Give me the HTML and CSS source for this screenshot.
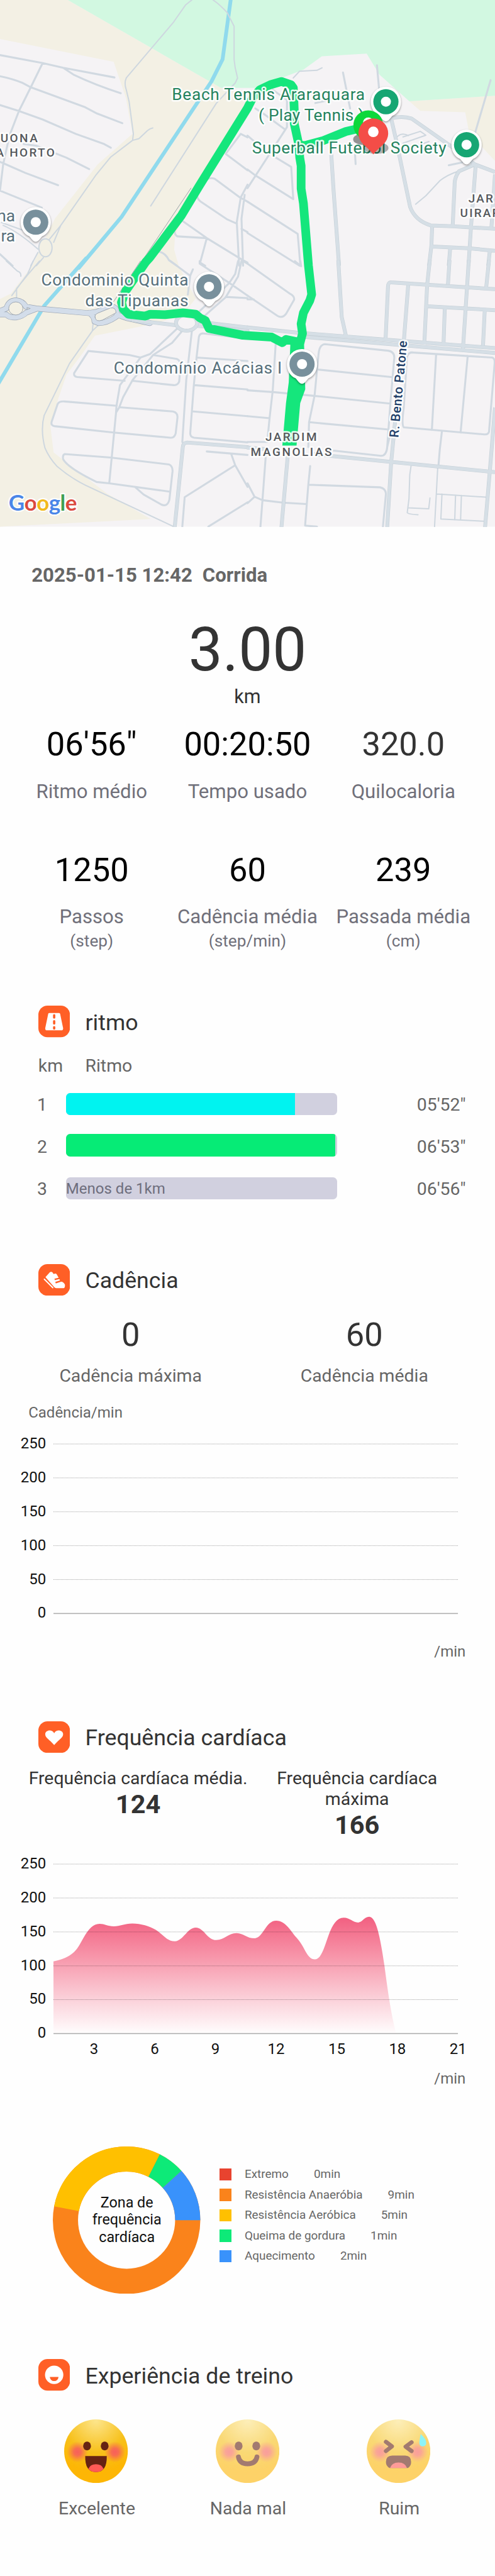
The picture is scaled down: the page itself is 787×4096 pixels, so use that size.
FILE: index.html
```html
<!DOCTYPE html>
<html lang="pt-BR">
<head>
<meta charset="utf-8">
<title>Corrida</title>
<link rel="stylesheet" href="styles.css">
</head>
<body>
<svg class="map" viewBox="0 0 1080 1150" preserveAspectRatio="none">
  <defs>
    <g id="pin"><path class="pin-body" d="M0 43C-5 43-8 38-14 31C-26 26-33 14-33 0A33 33 0 0 1 33 0C33 14 26 26 14 31C8 38 5 43 0 43Z"/><circle r="27.5" fill="currentColor"/><circle r="11" fill="#fff"/></g>
    <g id="q2casing">
      <path d="M530 900L545 1120L580 1568M910 700L940 820L1030 1220Q1060 1300 1160 1330L1300 1335L1568 1350M900 700Q980 680 1040 700L1300 870L1440 970L1568 1015M1440 970L1340 1010Q1310 1050 1312 1090L1300 1330M1445 980L1415 1350L1400 1568M1568 1030L1545 1345M1170 1335L1165 1450L1150 1568M1170 1455L1400 1465L1568 1480M1284 1465L1275 1568M1535 1480L1525 1568"/>
    </g>
    <g id="q4casing">
      <path d="M575 -5L597 325L625 440M875 450L890 150Q890 122 910 124L1568 163M1018 140L990 470M1155 -5L1138 140L1120 485M1280 -5L1270 135M1402 -5L1365 510M1530 -5L1512 155M1138 262L1568 285M1250 270L1242 480M1503 285L1492 490M-5 385L310 415L860 455L1568 505M360 440L620 460L1568 533M935 930L910 1170L885 1545M420 1120L540 1132L1568 1225M255 1130L215 1545M1568 850L1535 1220L1505 1545M-5 1082L120 1092"/>
    </g>
  </defs>
  <rect width="1080" height="1150" fill="#f5f3f5"/>
  <path fill="#f3f0e4" d="M0 0H148L482 192L545 200L540 235L396 481L382 514L380 545L390 580L427 652L396 690L327 709L207 733L179 773L145 818L127 871L110 931L117 988L165 1025L234 1078L329 1133L0 1150V653L24 641L70 580L120 477L213 359L289 292L275 215L248 135L0 85ZM893 221L917 242L1015 245L1024 292L1080 351V209Z"/>
  <path fill="#d2f8e1" d="M148 0L482 192H557L662 152L702 123L800 117L828 163L893 221L1080 209V0Z"/>

  <g class="roads" transform="scale(.3444 .37)">
    <path class="river" d="M1462 -5L1410 350L1340 480L770 1280L500 1580"/>
    <path class="minor" d="M0 325L270 372L400 400L725 457M400 400L465 440Q600 500 765 550M0 450Q80 465 145 490L195 515L540 633L615 670L775 727M0 620L120 655L270 705L480 790L660 850L702 872M150 850L230 860L420 930L565 998M0 955L25 965L160 1020L368 1093M270 372L195 515L120 655L60 800L20 970L0 1125L265 1225M0 1125V1100M0 1500L80 1568M1568 810L1525 790L1430 908L1568 1005M1310 1060Q1330 1045 1360 1055L1520 1165L1568 1190M1310 1060L1250 1150Q1245 1175 1280 1195L1440 1295L1500 1320M1568 1090L1525 1165L1500 1310L1515 1568M1550 1150L1530 1290L1540 1568M1530 1350L1568 1370M1105 1350L1150 1300L1310 1405L1520 1525L1568 1550M1105 1350Q1105 1390 1125 1395L1310 1405L1268 1550L1300 1568M1010 1485Q1050 1495 1070 1535L1120 1568"/>
    <path class="thin" d="M1215 0L1175 30L1100 130L800 460Q785 490 800 530L818 600L845 790L840 828L700 928L610 1030L385 1330L340 1430M840 828L880 818L935 770Q950 758 968 755M1350 0Q1390 25 1440 75L1483 155V350L1490 400L1505 460L1490 490L1370 610L955 1215M0 1310L150 1360M20 1330Q120 1370 240 1470M385 1330L310 1415M240 1490L195 1568M275 1520L230 1568"/>
    <ellipse class="thin" cx="288" cy="1462" rx="42" ry="53" fill="#f3f0e4"/>
    <path class="edge" d="M1210 1110L880 1568"/>
  </g>
  <g class="roads" transform="translate(540 0) scale(.3444 .37)">
    <path class="minor" d="M160 530L250 590V750L0 1110M100 670L240 765M0 800L50 840M50 640L100 670M0 1000L50 1035L290 1175L277 985L180 930M0 1190L318 1380L335 1568M0 1375L330 1568M605 428L650 640M820 385L835 540M680 890L685 968M430 608L520 590M1275 975L1360 958M1540 473L1440 790"/>
    <path class="thin" d="M290 460L330 420L440 415L472 400M985 808L1095 775L1130 798L985 845M950 805Q980 780 1020 800M1065 1205L1130 1155L1220 1065Q1270 1030 1330 1012M1000 885L1150 835"/>
    <use href="#q2casing" class="casing"/><use href="#q2casing" class="street"/>
  </g>
  <g class="roads" transform="translate(0 570) scale(.3444 .3762)">
    <path class="river" d="M545 -15L280 260L-10 710"/>
    <path class="thin" d="M40 0L110 58Q135 65 132 88M210 0L175 75L75 200M250 0L175 80L105 160V210M590 360L585 405L440 595L280 895Q255 980 285 1085Q310 1140 360 1190Q450 1260 540 1300L1100 1541M620 375L585 405"/>
    <path class="minor" d="M1080 0L1205 85L1222 48M1205 85L1190 195M1265 0V15L1450 125L1568 200M1508 0L1490 75L1450 130L1265 290M1530 0L1508 90L1430 210L1300 315M1430 208L1568 215M1540 0L1568 15M1130 385L950 540L890 560L760 720L738 840L735 880L692 1290M1150 410L1090 475L970 545L840 690L780 790L755 850L735 880M560 522L820 545L890 560M560 522L470 650Q465 670 490 673L790 695M970 545L1120 568Q1145 578 1143 610L1135 700Q1125 722 1100 720L840 695M740 840L410 815Q375 812 365 830L328 930Q320 955 345 958L720 995M755 848L1095 873Q1128 880 1124 910L1113 1000Q1105 1027 1080 1025L720 995M700 1140L410 1120Q395 1125 400 1150Q430 1200 612 1282L692 1290M700 1140L1070 1180Q1095 1190 1093 1220L1073 1385Q1060 1430 1020 1412L910 1355L860 1315M692 1290L1075 1338M1215 410L1180 690L1155 1050M1568 450L1290 420Q1265 418 1260 440L1245 560L1228 720L1205 1000Q1205 1022 1230 1025L1568 1052M1245 560L1568 580M1232 720L1568 745M1215 872L1568 900M1310 1105L1568 1125M1465 1120L1490 1185L1568 1310M1490 1185L1170 1370L1155 1541M1320 1541L1568 1400"/>
    <path class="highway-edge" d="M0 290L40 275Q55 230 100 228Q145 232 165 265L230 275L560 302L610 295L700 265Q745 262 740 310L800 330L950 360M0 310L40 310Q60 330 100 327Q145 320 165 300L230 277M565 300Q600 325 598 350L625 360Q680 360 740 320"/>
    <path class="highway" d="M0 290L40 275Q55 230 100 228Q145 232 165 265L230 275L560 302L610 295L700 265Q745 262 740 310L800 330L950 360M0 310L40 310Q60 330 100 327Q145 320 165 300L230 277M565 300Q600 325 598 350L625 360Q680 360 740 320"/>
    <ellipse cx="100" cy="275" rx="45" ry="38" fill="#f3f0e4" stroke="#9da7b4"/>
    <path class="island" d="M602 325Q600 310 620 302L700 272Q735 268 735 300L650 342Q605 357 602 325ZM172 270L192 275L174 280Z"/>
    <path class="casing" d="M840 342L1110 372M1235 375L1568 405M1230 350L1568 385M1568 1080L1185 1053Q1160 1055 1158 1080L1105 1560"/>
    <path class="street" d="M840 342L1110 372M1235 375L1568 405M1230 350L1568 385M1568 1080L1185 1053Q1160 1055 1158 1080L1105 1560"/>
    <ellipse class="casing" cx="1182" cy="358" rx="67" ry="46" fill="#f5f3f5"/>
    <ellipse class="street" cx="1182" cy="358" rx="67" ry="46" fill="none"/>
    <path class="edge" d="M890 0L720 235"/>
  </g>
  <g class="roads" transform="translate(540 570) scale(.3444 .3762)">
    <path class="minor" d="M0 15L270 190Q300 205 295 225L245 305Q220 335 190 318L40 225L0 200M0 222H40M300 0L340 30L335 0M180 460L160 750L140 910L125 1050L0 1050M0 750L160 760L420 782L905 827M0 900L140 912M905 1000L885 1080Q880 1130 845 1130L545 1100M390 935L885 977M450 630L910 673M385 1080L390 935L425 780L450 540Q455 485 490 482L890 520Q930 525 930 560L905 827L885 1080M1035 530L1550 560Q1570 565 1565 600L1530 990Q1525 1008 1500 1006L990 965Q975 950 990 850L1010 560Q1015 530 1045 530M1195 540L1168 980M1395 550L1350 995M1232 985L1218 1095L1210 1185M115 1140L95 1385L82 1541M0 1290L45 1368L0 1405M45 1368L95 1388L225 1402L375 1410M397 1190L385 1300L365 1535L440 1541M385 1298L840 1313Q875 1320 877 1350L858 1541"/>
    <path class="thin" d="M1036 1190L1028 1240L1023 1380L1012 1460Q1018 1470 1080 1472M1020 1432L1148 1438L1156 1375M1205 1200L1185 1541M1200 1352L1510 1370M1232 1352L1225 1497L1500 1510M1318 1358L1313 1502M1355 1360L1350 1502"/>
    <use href="#q4casing" class="casing"/><use href="#q4casing" class="street"/>
  </g>

  <path class="route" d="M785 280L755 287L705 307L664 318L652 316L642 270V240L640 192L635 185L614 178L590 185L567 196L552 212L540 236L434 407L396 470L327 562L318 572L275 634L265 660L269 675L280 686L317 690L328 686L360 687L399 683L427 686L436 694L448 700L456 717L530 732L593 736L616 748L624 741L647 746"/>
  <path class="route" d="M652 316L654 344L657 362V412L662 444L673 580L680 643L676 656L662 683L657 707L660 728L655 747L645 755"/>
  <path fill="#15e67c" d="M634 740L663 736L666 850L655 880L647 973H616L624 880L630 835Z"/>

  <g class="poi">
    <text x="375" y="219" textLength="421">Beach Tennis Araraquara</text>
    <text x="564" y="264" textLength="230">( Play Tennis )</text>
    <text x="550" y="335.500" textLength="424">Superball Futebol Society</text>
  </g>
  <g class="poi slate">
    <text x="33" y="483" text-anchor="end">na</text>
    <text x="33" y="527" text-anchor="end">ra</text>
    <text x="90" y="624" textLength="321">Condominio Quinta</text>
    <text x="186" y="669" textLength="225">das Tipuanas</text>
    <text x="248" y="815" textLength="367">Condomínio Acácias I</text>
  </g>
  <g class="district">
    <text x="1" y="310" textLength="84">UONA</text>
    <text x="-9" y="342" textLength="131">A HORTO</text>
    <text x="1022" y="442">JAR</text>
    <text x="1004" y="474">UIRAP</text>
    <text x="579" y="963" textLength="115">JARDIM</text>
    <text x="547" y="995" textLength="180">MAGNOLIAS</text>
  </g>
  <text class="street-name" transform="translate(872 924) rotate(-84.800)" x="-32" textLength="212">R. Bento Patone</text>

  <use href="#pin" x="78" y="485" color="#78909c"/>
  <use href="#pin" x="456" y="626" color="#78909c"/>
  <use href="#pin" x="659" y="795" color="#78909c"/>
  <use href="#pin" x="842" y="222" color="#17a673"/>
  <use href="#pin" x="1018" y="316" color="#17a673"/>
  <g transform="translate(803.500 271)">
    <ellipse cx="-8" cy="33" rx="25" ry="13" fill="#000" opacity=".4"/>
    <path fill="#0cd83b" d="M0 49Q-5 42-20 28A32.500 32.500 0 1 1 20 28Q5 42 0 49Z"/><circle cy="-3" r="11.500" fill="#fff"/>
  </g>
  <g transform="translate(814.500 290)">
    <ellipse cx="6" cy="33" rx="27" ry="13" fill="#000" opacity=".3"/>
    <path fill="#f44d47" d="M0 47Q-5 40-22 25A32.500 32.500 0 1 1 22 25Q5 40 0 47Z"/><circle cy="-2" r="11.500" fill="#fff"/>
  </g>
  <text class="google" x="19" y="1115" textLength="149"><tspan fill="#4a86e8">G</tspan><tspan fill="#db4a3f">o</tspan><tspan fill="#f2b91c">o</tspan><tspan fill="#4a86e8">g</tspan><tspan fill="#3fa052">l</tspan><tspan fill="#db4a3f">e</tspan></text>
</svg>

<section class="summary">
  <h1 class="when"><span>2025-01-15 12:42</span><span>Corrida</span></h1>
  <div class="distance">3.00</div>
  <div class="distance-unit">km</div>
  <div class="stats">
    <div class="stat"><b>06'56"</b><span>Ritmo médio</span></div>
    <div class="stat"><b>00:20:50</b><span>Tempo usado</span></div>
    <div class="stat"><b class="soft">320.0</b><span>Quilocaloria</span></div>
  </div>
  <div class="stats second">
    <div class="stat"><b>1250</b><span>Passos</span><small>(step)</small></div>
    <div class="stat"><b>60</b><span>Cadência média</span><small>(step/min)</small></div>
    <div class="stat"><b>239</b><span>Passada média</span><small>(cm)</small></div>
  </div>
</section>

<section class="pace">
  <h2><svg class="badge" viewBox="0 0 69 69"><rect width="69" height="69" rx="20"/><path fill="#fff" d="M24 16H45Q47 16 47.500 18L54 49Q54.500 54 50 54H19Q14.500 54 15 49L21.500 18Q22 16 24 16Z"/><path stroke="#ff5f26" stroke-width="5" stroke-linecap="round" d="M34.500 21V26M34.500 34V39M34.500 47V50"/></svg><span>ritmo</span></h2>
  <div class="pace-head"><span>km</span><span>Ritmo</span></div>
  <div class="pace-row"><span>1</span><div class="bar"><i class="cyan" style="width:84.500%"></i></div><span>05'52"</span></div>
  <div class="pace-row mid"><span>2</span><div class="bar"><i class="green" style="width:99.300%"></i></div><span>06'53"</span></div>
  <div class="pace-row"><span>3</span><div class="bar">Menos de 1km</div><span>06'56"</span></div>
</section>

<section class="cadence">
  <h2><svg class="badge" viewBox="0 0 69 69"><rect width="69" height="69" rx="20"/><path fill="#fff" d="M15.500 28.500L25 18Q27.500 16 30 17.500Q32 19 33 21.500L37.500 20.500Q39.500 20.500 40.500 23L47 35L49 38Q56 39 58 45Q58.500 52 55 52.500H39Q36.500 52.500 34.500 50Z"/><path stroke="#fff" stroke-width="2.600" stroke-linecap="round" d="M13 33L31.500 51.500"/><path stroke="#ff5f26" stroke-width="3.400" d="M35.500 33.500L50 30M37.500 40.500L50 36.500"/></svg><span>Cadência</span></h2>
  <div class="pair">
    <div><b>0</b><span>Cadência máxima</span></div>
    <div><b>60</b><span>Cadência média</span></div>
  </div>
  <div class="chart-title">Cadência/min</div>
  <div class="chart">
    <div class="y-axis"><span>250</span><span>200</span><span>150</span><span>100</span><span>50</span><span>0</span></div>
    <svg class="plot" viewBox="0 0 883 370" preserveAspectRatio="none">
      <path class="grid" d="M0 0H883M0 74H883M0 148H883M0 222H883M0 296H883"/><path class="base" d="M0 370H883"/>
    </svg>
  </div>
  <div class="unit">/min</div>
</section>

<section class="heart">
  <h2><svg class="badge" viewBox="0 0 69 69"><rect width="69" height="69" rx="20"/><path fill="#fff" d="M34.500 52Q31 48 26 43C20 37 15 34 15 28C15 20 29 16 34.500 26C40 16 54 20 54 28C54 34 49 37 43 43Q38 48 34.500 52Z"/></svg><span>Frequência cardíaca</span></h2>
  <div class="heart-stats">
    <div>Frequência cardíaca média.<b>124</b></div>
    <div>Frequência cardíaca máxima<b>166</b></div>
  </div>
  <div class="chart">
    <div class="y-axis"><span>250</span><span>200</span><span>150</span><span>100</span><span>50</span><span>0</span></div>
    <svg class="plot" viewBox="170 638.500 1282 674.500" preserveAspectRatio="none">
      <defs><linearGradient id="pulse" x1="0" y1="0" x2="0" y2="1"><stop offset="0" stop-color="#f25f80"/><stop offset=".35" stop-color="#f797ab"/><stop offset=".7" stop-color="#fbd0d9"/><stop offset="1" stop-color="#fffdfd"/></linearGradient></defs>
      <path fill="url(#pulse)" d="M170 1026C200 1017 215 1011 235 989C262 958 275 877 316 876C332 876 342 886 361 886C382 886 395 875 420 875C448 876 473 884 495 901C520 922 530 946 555 946C583 942 594 891 621 891C649 893 656 940 686 941C712 940 724 913 750 913C774 914 781 934 809 934C836 929 843 864 876 864C907 864 923 909 943 935C968 970 973 1017 999 1018C1037 1014 1037 852 1090 852C1110 852 1119 871 1136 871C1150 869 1155 848 1171 848C1191 850 1204 912 1219 1043C1231 1155 1238 1220 1256 1313H170Z"/>
      <path class="grid" d="M170 638.500H1452M170 773.500H1452M170 908.500H1452M170 1043.500H1452M170 1178H1452"/><path class="base" d="M170 1313H1452"/>
    </svg>
  </div>
  <div class="x-axis"><span>3</span><span>6</span><span>9</span><span>12</span><span>15</span><span>18</span><span>21</span></div>
  <div class="unit">/min</div>
</section>

<section class="zones">
  <div class="donut">
    <svg viewBox="0 0 322 322" fill="none" stroke-width="55">
      <circle cx="161" cy="161" r="133.500" stroke="#fa831b"/>
      <circle cx="161" cy="161" r="133.500" pathLength="17" stroke="#ffc000" stroke-dasharray="0 9 5 3"/>
      <circle cx="161" cy="161" r="133.500" pathLength="17" stroke="#0dea78" stroke-dasharray="0 14 1 2"/>
      <circle cx="161" cy="161" r="133.500" pathLength="17" stroke="#3992fb" stroke-dasharray="0 15 2 0"/>
    </svg>
    <p>Zona de<br>frequência<br>cardíaca</p>
  </div>
  <ul class="legend">
    <li><i class="red"></i><span>Extremo</span><span>0min</span></li>
    <li><i class="orange"></i><span>Resistência Anaeróbia</span><span>9min</span></li>
    <li><i class="yellow"></i><span>Resistência Aeróbica</span><span>5min</span></li>
    <li><i class="mint"></i><span>Queima de gordura</span><span>1min</span></li>
    <li><i class="blue"></i><span>Aquecimento</span><span>2min</span></li>
  </ul>
</section>

<section class="mood">
  <h2><svg class="badge" viewBox="0 0 69 69"><rect width="69" height="69" rx="20"/><circle cx="34.500" cy="34.500" r="20" fill="#fff"/><path d="M25 39H44Q43 48 34.500 48Q26 48 25 39Z"/></svg><span>Experiência de treino</span></h2>
  <div class="faces">
    <div>
      <svg viewBox="0 0 139 139">
        <defs>
          <radialGradient id="skin" cx=".5" cy=".02" r="1"><stop offset="0" stop-color="#fde58c"/><stop offset=".5" stop-color="#f7c01a"/><stop offset=".8" stop-color="#fdb605"/></radialGradient>
          <radialGradient id="cheek"><stop offset="0" stop-color="#f75f5b"/><stop offset=".35" stop-color="#f75f5b" stop-opacity=".85"/><stop offset="1" stop-color="#f76c4b" stop-opacity="0"/></radialGradient>
          <g id="head"><circle cx="69.500" cy="69.500" r="69.500" fill="url(#skin)"/><circle cx="29" cy="71" r="23" fill="url(#cheek)"/><circle cx="111" cy="71" r="23" fill="url(#cheek)"/></g>
          <g id="eyes" fill="#662313"><ellipse cx="50" cy="58" rx="8.500" ry="9.500"/><ellipse cx="88.500" cy="58" rx="8.500" ry="9.500"/></g>
        </defs>
        <use href="#head"/><use href="#eyes"/>
        <path fill="#662313" d="M46 80H93Q94 115 69.500 115Q45 115 46 80Z"/><path fill="#ff5a56" d="M53 108Q57 98 69.500 98Q82 98 86 108Q80 115 69.500 115Q59 115 53 108Z"/>
      </svg>
      <span>Excelente</span>
    </div>
    <div>
      <svg class="faded" viewBox="0 0 139 139"><use href="#head"/><use href="#eyes"/><path fill="none" stroke="#662313" stroke-width="10.500" stroke-linecap="round" d="M49.500 82Q52 97 69.500 97Q87 97 90 82"/></svg>
      <span>Nada mal</span>
    </div>
    <div>
      <svg viewBox="0 0 139 139"><g class="faded"><use href="#head"/><path fill="none" stroke="#662313" stroke-width="9" stroke-linecap="round" stroke-linejoin="round" d="M42 49L55 59L42 69M98 50L85 59.500L98 69"/><path fill="#662313" d="M42 93Q42 79 56 79H84Q97 79 97 93Q97 102 90 106H50Q42 102 42 93Z"/><path fill="#ff5a56" d="M51 106Q55 94 69.500 94Q84 94 88 106Z"/></g><path fill="#8df3f7" d="M118 32Q130 43 130 51Q130 58 122 59Q115 58 115 51Q115 45 118 32Z"/></svg>
      <span>Ruim</span>
    </div>
  </div>
</section>
</body>
</html>
```
FILE: styles.css
```css
/* 1rem stands for 100 design pixels */
html { font-size: 72.83px; }
* { box-sizing: border-box; }
body { margin: 0; width: 787px; background: #fefefe; font: .39rem/.5rem Roboto, sans-serif; color: #666; overflow-x: hidden; }
h1, h2, p, ul { margin: 0; padding: 0; font-weight: 400; }
b { font-weight: 400; display: block; }
section { width: 100%; }

/* map */
.map { display: block; width: 100%; height: 11.5rem; }
.roads path, .roads ellipse, .roads use { vector-effect: non-scaling-stroke; }
.roads path { fill: none; stroke-linecap: round; stroke-linejoin: round; }
#q2casing path, #q4casing path { vector-effect: non-scaling-stroke; fill: none; stroke-linejoin: round; }
.minor { stroke: #d1d9e1; stroke-width: 3.1px; }
.thin { stroke: #ced7df; stroke-width: 2px; }
.river { stroke: #90daed; stroke-width: 6px; }
.edge { stroke: #99a3a8; stroke-width: 1px; }
.casing { stroke: #c6d0d7; stroke-width: 6px; }
.street { stroke: #d6dfe6; stroke-width: 4.8px; }
.highway-edge { stroke: #9da7b4; stroke-width: 9px; }
.highway { stroke: #d3ddea; stroke-width: 7.6px; }
.roads .island { fill: #f3f0e4; stroke: #9da7b4; stroke-width: 1px; }
.route { fill: none; stroke: #15e67c; stroke-width: 19; stroke-linejoin: round; }
.pin-body { fill: #fff; filter: drop-shadow(0 2px 2px rgba(0, 0, 0, .4)); }
.map text { paint-order: stroke; stroke: #fff; stroke-width: 7px; stroke-linejoin: round; stroke-opacity: .9; }
.poi { font-size: 36px; fill: #25835f; }
.slate { fill: #57707c; }
.district { font-size: 26px; font-weight: 500; fill: #55585c; letter-spacing: 3px; }
.street-name { font-size: 28px; font-weight: 500; fill: #213f69; }
.map .google { font: 700 48px Lato, sans-serif; stroke-width: 6px; }

/* summary */
.summary { height: 10.1rem; padding: .76rem .3rem 0; text-align: center; }
.when { display: flex; gap: .22rem; padding-left: .39rem; font-size: .428rem; font-weight: 700; line-height: .6rem; }
.distance { margin-top: .64rem; font-size: 1.32rem; line-height: 1.4rem; color: #333; }
.distance-unit { margin-top: .07rem; font-size: .42rem; color: #333; }
.stats { display: grid; grid-template-columns: repeat(3, 1fr); margin-top: .34rem; color: #70707a; white-space: nowrap; }
.stat { display: flex; flex-direction: column; align-items: center; }
.stat b { font-size: .72rem; line-height: .9rem; color: #000; }
.stat .soft { color: #333; }
.stat span { margin-top: .33rem; font-size: .428rem; }
.stat small { margin-top: .07rem; font-size: .36rem; line-height: .42rem; }
.second { margin-top: 1.01rem; }
.second span { margin-top: .32rem; }

/* section heading */
h2 { display: flex; align-items: center; gap: .335rem; height: .69rem; padding-left: .835rem; font-size: .49rem; color: #333; }
h2 span { padding-top: .04rem; }
.badge { width: .69rem; height: .69rem; fill: #ff5f26; }

/* pace */
.pace { height: 5.4rem; padding-top: .36rem; }
.pace-head { display: grid; grid-template-columns: 1.025rem 1fr; margin: .375rem 0 .135rem; padding-left: .835rem; }
.pace-row { display: grid; grid-template-columns: .63rem 5.92rem 1fr; align-items: center; height: .92rem; padding-left: .81rem; }
.pace-row > span { padding-top: .02rem; }
.pace-row > span:last-child { padding-left: 1.74rem; }
.bar { position: relative; top: -.015rem; height: .49rem; border-radius: .09rem; overflow: hidden; background: #d1d0df; font-size: .33rem; line-height: .52rem; color: #6e6e7d; }
.mid .bar { top: -.035rem; }
.bar i { display: block; height: 100%; }
.cyan { background: #00f3f0; }
.green { background: #06eb76; }

/* cadence */
.cadence { height: 10rem; padding-top: .6rem; }
.pair { display: grid; grid-template-columns: 1fr 1fr; margin-top: .405rem; padding: 0 .3rem; text-align: center; }
.pair b { margin-bottom: .195rem; font-size: .72rem; line-height: .9rem; color: #333; }
.chart-title { margin: .36rem 0 .48rem .62rem; font-size: .33rem; line-height: .4rem; }
.chart { display: flex; height: 3.7rem; }
.y-axis { display: flex; flex-direction: column; justify-content: space-between; width: 1.005rem; height: 4.1rem; margin: -.21rem .165rem 0 0; font-size: .33rem; line-height: .4rem; text-align: right; color: #111; }
.plot { width: 8.83rem; height: 3.7rem; overflow: visible; }
.grid, .base { fill: none; vector-effect: non-scaling-stroke; }
.grid { stroke: #000; stroke-opacity: .36; stroke-width: 1px; stroke-dasharray: 1px 1px; }
.base { stroke: #aaa; stroke-width: 1.6px; }
.unit { margin-top: .63rem; padding-right: .64rem; font-size: .33rem; line-height: .4rem; text-align: right; }

/* heart rate */
.heart { height: 9rem; padding-top: .58rem; }
.heart-stats { display: grid; grid-template-columns: 4.78rem 4.78rem; height: 2.1rem; margin-top: .33rem; padding-left: .625rem; line-height: .457rem; text-align: center; color: #333; }
.heart-stats b { margin-top: .035rem; font-size: .57rem; font-weight: 700; line-height: .6rem; }
.x-axis { display: grid; grid-template-columns: repeat(7, 1.325rem); margin: .136rem 0 0 1.39rem; font-size: .33rem; line-height: .4rem; text-align: center; color: #111; }
.heart .unit { margin-top: .25rem; }

/* zones */
.zones { display: flex; height: 5rem; padding: .86rem 0 0 1.16rem; }
.donut { display: grid; width: 3.22rem; height: 3.22rem; }
.donut svg, .donut p { grid-area: 1 / 1; }
.donut svg { width: 3.22rem; }
.donut p { align-self: center; font-size: .32rem; line-height: .376rem; text-align: center; color: #111; }
.legend { margin: .39rem 0 0 .41rem; list-style: none; font-size: .26rem; }
.legend li { display: flex; align-items: center; height: .447rem; }
.legend i { width: .265rem; height: .265rem; margin-right: .285rem; }
.legend span + span { margin-left: .55rem; }
.red { background: #e8432f; }
.orange { background: #fa831b; }
.yellow { background: #ffc000; }
.mint { background: #0dea78; }
.blue { background: #3992fb; }

/* mood */
.mood { height: 5.24rem; padding-top: .51rem; }
.faces { display: grid; grid-template-columns: repeat(3, 3.3rem); margin-top: .617rem; padding-left: .45rem; }
.faces > div { display: flex; flex-direction: column; align-items: center; }
.faces svg { width: 1.39rem; height: 1.39rem; margin-bottom: .313rem; }
.faces span { padding-left: .03rem; }
.faded { opacity: .6; }
```
